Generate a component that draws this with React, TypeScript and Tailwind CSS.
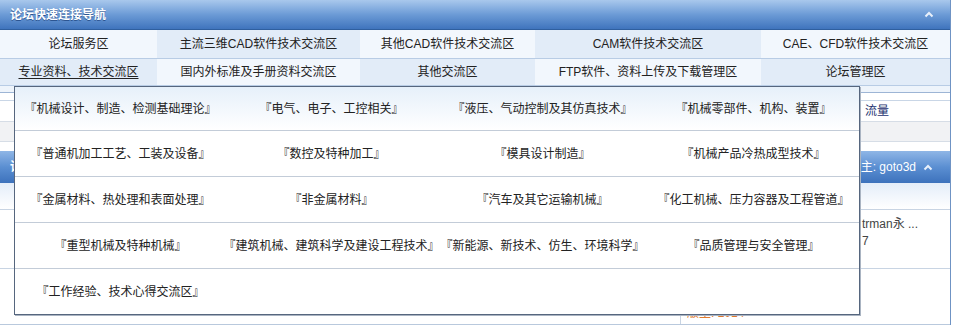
import React from 'react';

const navRows = [
  ['论坛服务区', '主流三维CAD软件技术交流区', '其他CAD软件技术交流区', 'CAM软件技术交流区', 'CAE、CFD软件技术交流区'],
  ['专业资料、技术交流区', '国内外标准及手册资料交流区', '其他交流区', 'FTP软件、资料上传及下载管理区', '论坛管理区'],
];

const menuRows = [
  ['『机械设计、制造、检测基础理论』', '『电气、电子、工控相关』', '『液压、气动控制及其仿真技术』', '『机械零部件、机构、装置』'],
  ['『普通机加工工艺、工装及设备』', '『数控及特种加工』', '『模具设计制造』', '『机械产品冷热成型技术』'],
  ['『金属材料、热处理和表面处理』', '『非金属材料』', '『汽车及其它运输机械』', '『化工机械、压力容器及工程管道』'],
  ['『重型机械及特种机械』', '『建筑机械、建筑科学及建设工程技术』', '『新能源、新技术、仿生、环境科学』', '『品质管理与安全管理』'],
  ['『工作经验、技术心得交流区』'],
];

function Caret() {
  return (
    <svg width="10" height="7" viewBox="0 0 10 7" className="shrink-0">
      <polyline points="1.5,5.5 5,2 8.5,5.5" fill="none" stroke="#e8f0fb" strokeWidth="2" />
    </svg>
  );
}

export default function App() {
  return (
    <div className="relative w-[953px] h-[325px] overflow-hidden bg-white text-[12px] leading-none text-[#222] font-['Liberation_Sans','Noto_Sans_CJK_SC',sans-serif]">
      <div className="w-[951px] border-r border-[#6f93c4]">
        {/* quick nav header */}
        <div className="h-[30px] flex items-center justify-between pl-[10px] pr-[16px] bg-gradient-to-b from-[#a9c8ec] via-[#6c9bd6] to-[#3f74bd] border-b border-[#2f5f9f]">
          <span className="font-bold text-white text-[12px] [text-shadow:0_1px_0_#2c5592]">论坛快速连接导航</span>
          <Caret />
        </div>

        {/* nav table */}
        {navRows.map((row, r) => (
          <div
            key={r}
            className={`grid grid-cols-[157px_203px_175px_226px_189px] border-b border-[#b8cce5] ${r === 0 ? 'h-[29px]' : 'h-[27px]'}`}
          >
            {row.map((t, c) => (
              <div
                key={c}
                className={`flex items-center justify-center whitespace-nowrap ${(r + c) % 2 === 0 ? 'bg-[#f2f7fd]' : 'bg-[#e2ecf8]'}`}
              >
                {r === 1 && c === 0 ? <span className="underline underline-offset-2">{t}</span> : t}
              </div>
            ))}
          </div>
        ))}

        {/* page content under the menu */}
        <div className="h-[7px] bg-[#eef4fb] border-b border-[#9db5d5]" />
        <div className="h-[7px]" />
        <div className="border-t border-[#c9d6e6]">
          <div className="h-[21px] flex items-center pl-[865px] border-b border-[#d6dde6] text-[#1b2f6e]">流量</div>
          <div className="h-[20px] bg-[#f1f2f4] border-b border-[#d6dde6]" />
        </div>
        <div className="h-[9px]" />
        <div className="h-[32px] flex items-center justify-between pl-[10px] pr-[17px] bg-gradient-to-b from-[#8fb6e6] via-[#5b8fd2] to-[#3d72bc]">
          <span className="font-bold text-white">论坛版块</span>
          <div className="flex items-center gap-[7px] text-white">
            <span>版主: goto3d</span>
            <Caret />
          </div>
        </div>
        <div className="h-[27px] bg-gradient-to-b from-[#e4edf9] to-white border-b border-[#c8d4e3]" />
        <div className="h-[59px] border-b border-[#c8d4e3] grid grid-cols-[681px_1fr]">
          <div />
          <div className="pl-[181px] pt-[8px] text-[#444] flex flex-col gap-[5px]">
            <span>trman永 ...</span>
            <span>7</span>
          </div>
        </div>
        <div className="h-[56px] border-b border-[#b9c9dd] grid grid-cols-[681px_1fr]">
          <div className="border-r border-[#c8d4e3]" />
          <div className="flex items-end pl-[6px] pb-[5px] text-[#e07a2c]">版主: 2014</div>
        </div>
      </div>

      {/* dropdown menu */}
      <div className="absolute left-[14px] top-[86px] w-[846px] h-[229px] border border-[#56667e] bg-white shadow-[1px_1px_0_#aab4c2]">
        {menuRows.map((row, r) => (
          <div
            key={r}
            className={`grid grid-cols-4 ${r === 0 ? 'h-[44px] bg-gradient-to-b from-[#e6f0fa] to-white' : r === 4 ? 'h-[45px]' : 'h-[46px]'} ${r < 4 ? 'border-b border-[#c3ccd8]' : ''}`}
          >
            {row.map((t, c) => (
              <div key={c} className="flex items-center justify-center whitespace-nowrap">
                {t}
              </div>
            ))}
          </div>
        ))}
      </div>
    </div>
  );
}
